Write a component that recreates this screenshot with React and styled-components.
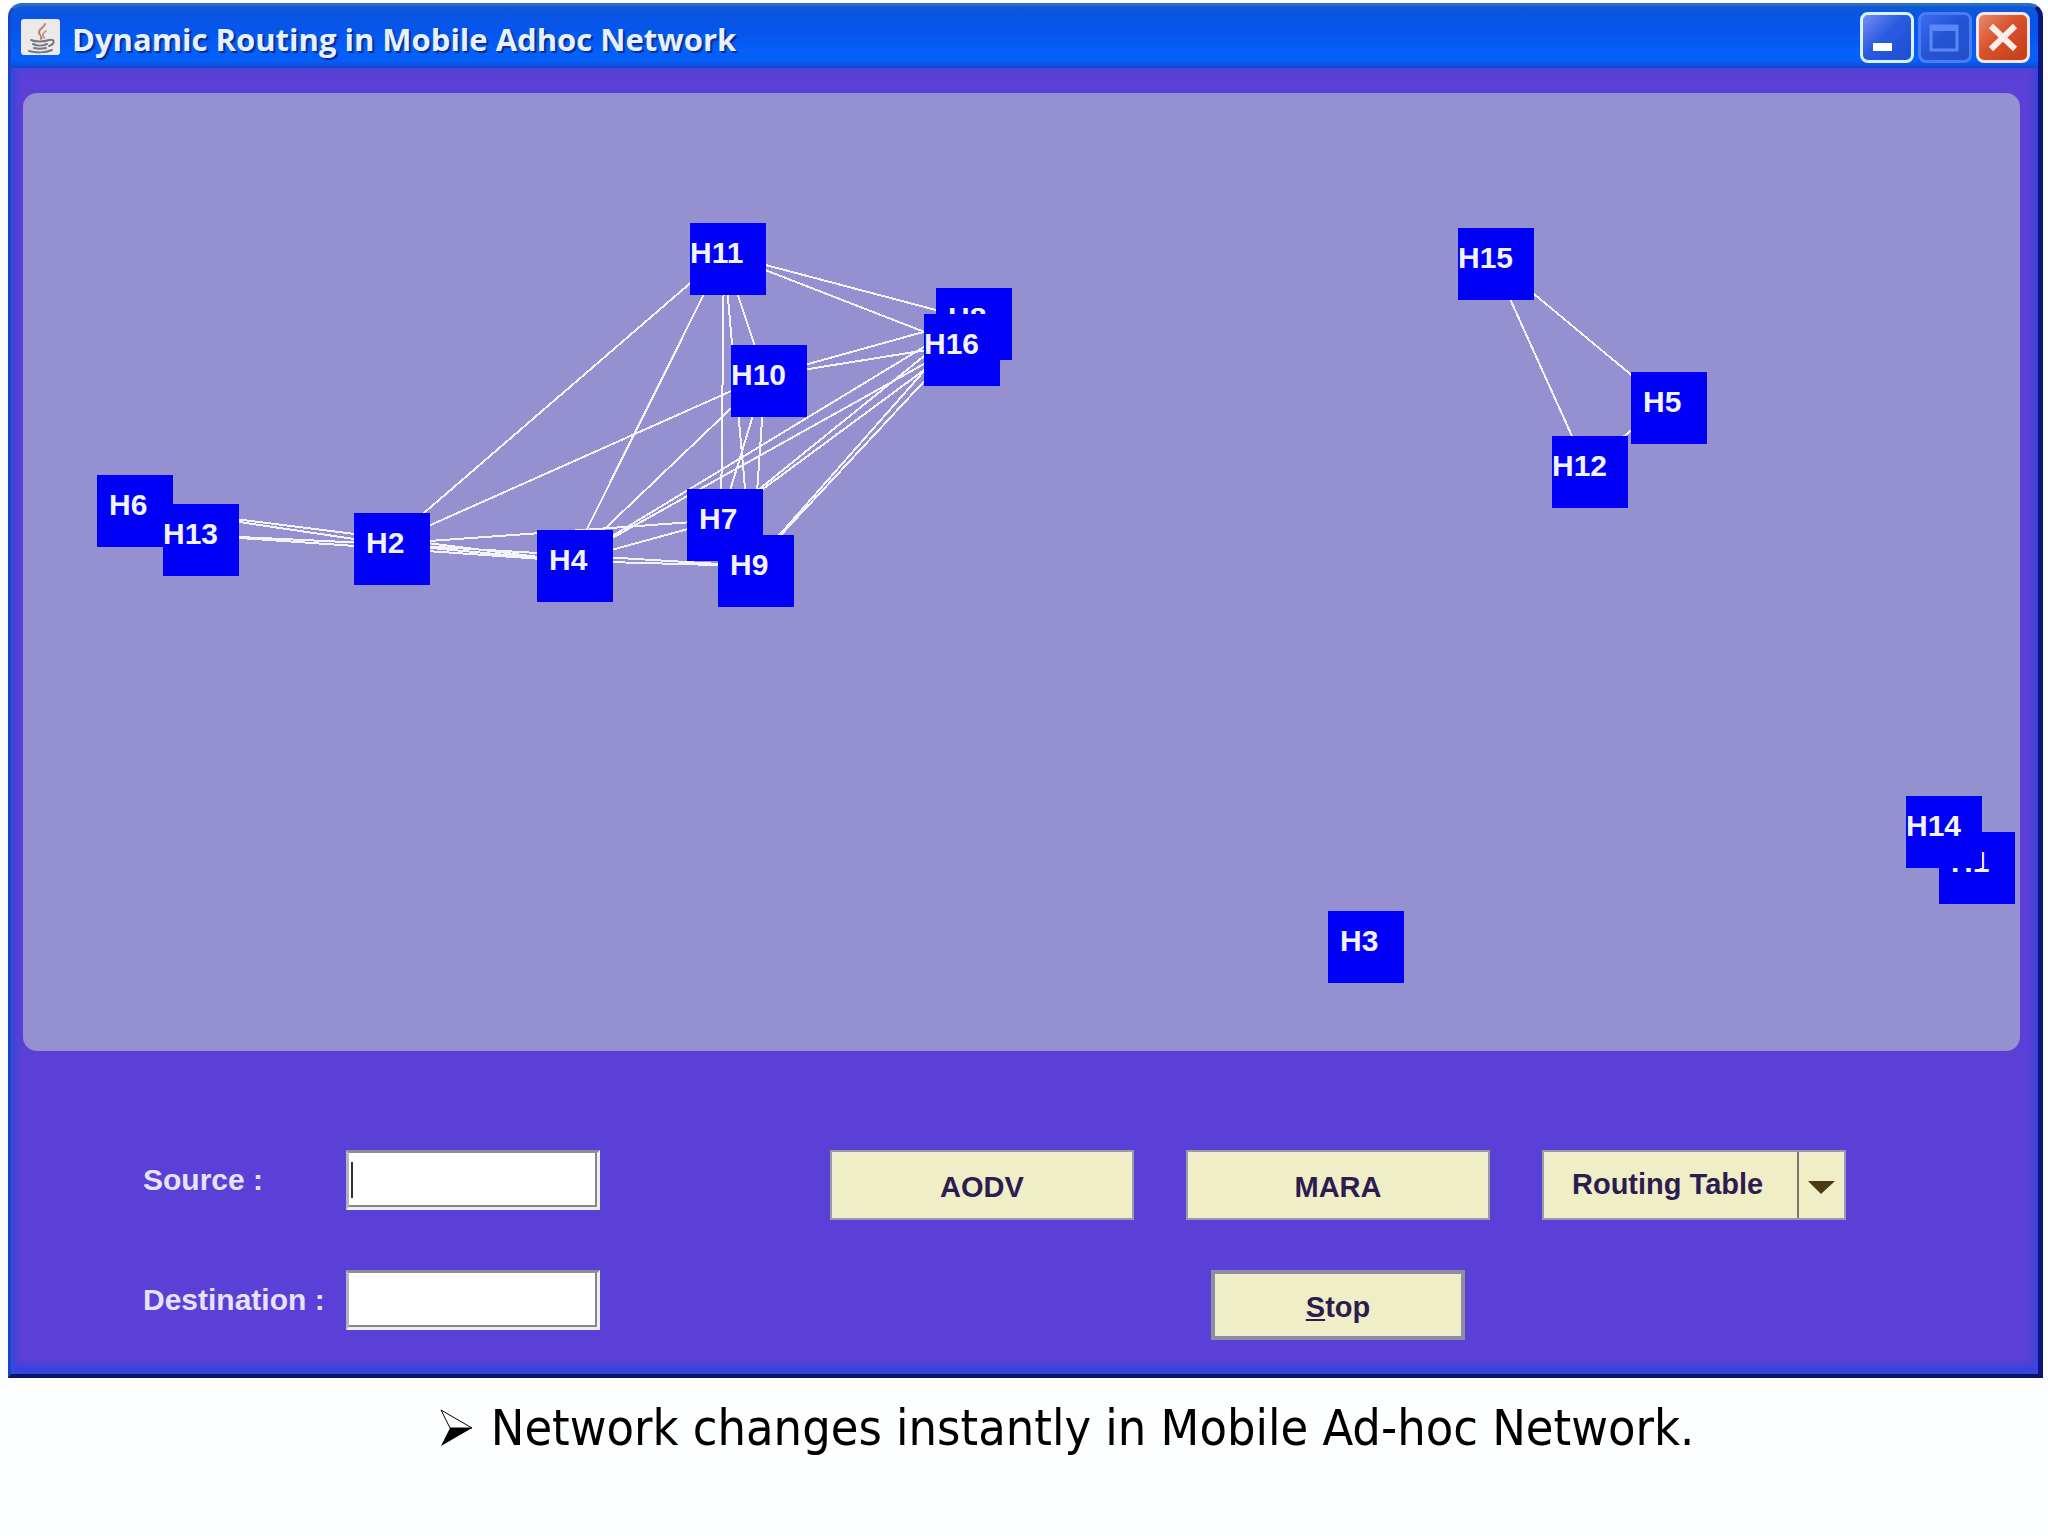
import React from "react";
import styled, { createGlobalStyle } from "styled-components";

const GlobalStyle = createGlobalStyle`
  * {
    box-sizing: border-box;
  }

  body {
    margin: 0;
    background: #fdfeff;
    font-family: "Liberation Sans", Arial, sans-serif;
  }
`;

const Page = styled.div`
  display: flex;
  flex-direction: column;
  min-height: 100vh;
`;

const Window = styled.main`
  flex: 1;
  display: flex;
  flex-direction: column;
  margin: 3px 5px 0 8px;
  border: 3px solid #1747c4;
  border-top-color: #2a6fc4;
  border-right: 5px solid #0b1580;
  border-bottom: 4px solid #081468;
  border-radius: 14px 14px 0 0;
  overflow: hidden;
  background: #5a40d6;
`;

const TitleBar = styled.header`
  display: flex;
  align-items: center;
  height: 62px;
  padding: 0 8px 0 10px;
  background: linear-gradient(
    #0f5ad6 0%,
    #0a55e4 15%,
    #0556ee 45%,
    #0560fa 75%,
    #0560fa 88%,
    #1446cc 100%
  );
`;

const Title = styled.h1`
  flex: 1;
  margin: 0;
  padding: 4px 0 0 12px;
  color: #e6f1fb;
  font: 700 31px/40px "Open Sans", sans-serif;
  text-shadow: 2px 2px 1px #0a2c94;
`;

const WindowButtons = styled.div`
  display: flex;
  gap: 4px;
`;

const looks = {
  minimize: ["#d6f2fb", "linear-gradient(135deg, #7590f4, #2a5ae0 45%, #1d4fd0)"],
  maximize: ["#4a7cf4", "linear-gradient(135deg, #3a6af0, #2454d4 50%, #2250cc)"],
  close: ["#f7e4e4", "linear-gradient(135deg, #e88a6c, #d8502c 45%, #c43c18)"],
};

const WindowButton = styled.button`
  width: 54px;
  height: 51px;
  padding: 0;
  border: 3px solid ${(props) => looks[props.$look][0]};
  border-radius: 8px;
  background: ${(props) => looks[props.$look][1]};

  & svg {
    display: block;
  }
`;

const Body = styled.div`
  flex: 1;
  display: flex;
  flex-direction: column;
  padding: 25px 18px 34px 12px;
  box-shadow: inset 5px 0 5px #3a48de, inset -5px 0 5px #3f44da,
    inset 0 -8px 6px #2e46de;
`;

const Canvas = styled.section`
  position: relative;
  flex: 1;
  min-height: 900px;
  border-radius: 14px;
  background: #9590d0;
  overflow: hidden;
`;

const Links = styled.svg`
  position: absolute;
  width: 100%;
  height: 100%;
  stroke: #f4f3fa;
  stroke-width: 2;
  shape-rendering: crispEdges;
`;

// nodes sit at free positions on the canvas
const Node = styled.div`
  position: absolute;
  width: 76px;
  height: 72px;
  padding: 14px 0 0 ${(props) => (props.$wide ? "0" : "12px")};
  background: #0000f6;
  color: #f2f2fc;
  font-size: 30px;
  font-weight: 700;
  line-height: 32px;
`;

const Controls = styled.form`
  display: flex;
  justify-content: space-between;
  padding: 99px 174px 0 120px;
`;

const Fields = styled.div`
  display: grid;
  grid-template-columns: 203px 254px;
  grid-auto-rows: 60px;
  row-gap: 60px;
  align-items: center;
`;

const Label = styled.label`
  color: #e6e2f8;
  font-size: 30px;
  font-weight: 700;
`;

const Field = styled.div`
  position: relative;
  height: 60px;
`;

const TextBox = styled.input`
  width: 100%;
  height: 100%;
  padding: 0 8px;
  border: 3px solid #f0f0f2;
  border-top-color: #8d8d98;
  border-left-color: #b4b4c0;
  background: #fff;
  box-shadow: inset -2px -2px 0 #85858c;
  font-size: 29px;
  outline: none;
`;

const Caret = styled.span`
  position: absolute;
  left: 5px;
  top: 12px;
  width: 2px;
  height: 36px;
  background: #333;
`;

const Actions = styled.div`
  display: grid;
  grid-template-columns: repeat(3, 304px);
  gap: 50px 52px;
  align-items: start;
`;

const Button = styled.button`
  height: 70px;
  padding: 4px 0 0;
  border: 2px solid #9c9c9c;
  background: #f0eec6;
  box-shadow: inset 0 0 0 2px #eeecd8;
  color: #2c1c50;
  font: 700 29px/32px "Liberation Sans", Arial, sans-serif;
`;

const StopButton = styled(Button)`
  grid-column: 2;
  justify-self: center;
  width: 254px;
  border: 4px solid #8f8f9c;
`;

const Dropdown = styled.div`
  position: relative;
  height: 70px;

  & svg {
    position: absolute;
    right: 0;
    top: 0;
    pointer-events: none;
  }
`;

const Select = styled.select`
  appearance: none;
  width: 100%;
  height: 100%;
  padding: 0 50px 2px 28px;
  border: 2px solid #9c9c9c;
  border-radius: 0;
  background: #f0eec6;
  box-shadow: inset 0 0 0 2px #eeecd8;
  color: #2c1c50;
  font: 700 29px/32px "Liberation Sans", Arial, sans-serif;
`;

const Caption = styled.footer`
  display: flex;
  justify-content: center;
  align-items: flex-start;
  gap: 18px;
  height: 158px;
  padding: 18px 0 0 86px;
  color: #000;
  font: 400 50px/64px "DejaVu Sans Condensed", "DejaVu Sans", sans-serif;

  & svg {
    margin-top: 13px;
  }

  & p {
    margin: 0;
  }
`;

// later nodes are painted over earlier ones
const nodes = {
  H1: [1916, 739],
  H2: [331, 420],
  H3: [1305, 818],
  H4: [514, 437],
  H5: [1608, 279],
  H6: [74, 382],
  H7: [664, 396],
  H8: [913, 195],
  H9: [695, 442],
  H10: [708, 252],
  H11: [667, 130],
  H12: [1529, 343],
  H13: [140, 411],
  H14: [1883, 703],
  H15: [1435, 135],
  H16: [901, 221],
};

const links = [
  ["H6", "H2"],
  ["H6", "H4"],
  ["H13", "H2"],
  ["H13", "H4"],
  ["H2", "H4"],
  ["H2", "H7"],
  ["H2", "H9"],
  ["H2", "H10"],
  ["H2", "H11"],
  ["H4", "H7"],
  ["H4", "H9"],
  ["H4", "H10"],
  ["H4", "H11"],
  ["H4", "H8"],
  ["H4", "H16"],
  ["H7", "H8"],
  ["H7", "H10"],
  ["H7", "H11"],
  ["H7", "H16"],
  ["H9", "H8"],
  ["H9", "H10"],
  ["H9", "H11"],
  ["H9", "H16"],
  ["H10", "H8"],
  ["H10", "H11"],
  ["H10", "H16"],
  ["H11", "H8"],
  ["H11", "H16"],
  ["H15", "H5"],
  ["H15", "H12"],
  ["H5", "H12"],
];

const JavaIcon = () => (
  <svg width="39" height="36" viewBox="0 0 39 36" aria-hidden="true">
    <rect width="39" height="36" rx="3" fill="#ece9ea" />
    <g fill="none" strokeLinecap="round">
      <path d="M24 5c-1 4-7 5-6 9 1 2 3 3 2 6" stroke="#b98772" strokeWidth="2" />
      <path d="M25 12c-3 2-4 3-2 7" stroke="#c79f8e" strokeWidth="2" />
      <path
        d="M10 21c4 2 13 2 18 0M12 25c4 2 10 2 14 0M13 29c4 1 8 1 12 0M8 32c7 2 17 2 23-1M29 21c5-1 5 4-1 6"
        stroke="#77777f"
        strokeWidth="2"
      />
    </g>
  </svg>
);

function Network() {
  return (
    <Canvas>
      <Links>
        {links.map(([a, b]) => (
          <line
            key={a + b}
            x1={nodes[a][0] + 34}
            y1={nodes[a][1] + 31}
            x2={nodes[b][0] + 34}
            y2={nodes[b][1] + 31}
          />
        ))}
      </Links>
      {Object.entries(nodes).map(([name, [x, y]]) => (
        <Node key={name} $wide={name.length > 2} style={{ left: x, top: y }}>
          {name}
        </Node>
      ))}
    </Canvas>
  );
}

export default function App() {
  return (
    <Page>
      <GlobalStyle />
      <Window>
        <TitleBar>
          <JavaIcon />
          <Title>Dynamic Routing in Mobile Adhoc Network</Title>
          <WindowButtons>
            <WindowButton $look="minimize" aria-label="Minimize">
              <svg width="48" height="45">
                <rect x="10" y="28" width="19" height="8" fill="#fff" />
              </svg>
            </WindowButton>
            <WindowButton $look="maximize" aria-label="Maximize">
              <svg width="48" height="45" fill="none" stroke="#5c86f4">
                <rect x="10" y="11" width="26" height="24" strokeWidth="3" />
                <path d="M9 13h28" strokeWidth="6" />
              </svg>
            </WindowButton>
            <WindowButton $look="close" aria-label="Close">
              <svg width="48" height="45">
                <path d="M12 11l24 23M36 11L12 34" stroke="#fbeee8" strokeWidth="6" />
              </svg>
            </WindowButton>
          </WindowButtons>
        </TitleBar>

        <Body>
          <Network />
          <Controls onSubmit={(e) => e.preventDefault()}>
            <Fields>
              <Label htmlFor="source">Source :</Label>
              <Field>
                <TextBox id="source" type="text" />
                <Caret />
              </Field>
              <Label htmlFor="destination">Destination :</Label>
              <Field>
                <TextBox id="destination" type="text" />
              </Field>
            </Fields>
            <Actions>
              <Button type="button">AODV</Button>
              <Button type="button">MARA</Button>
              <Dropdown>
                <Select aria-label="Routing Table">
                  <option>Routing Table</option>
                </Select>
                <svg width="50" height="70">
                  <path d="M2 2v66" stroke="#77776c" strokeWidth="2" />
                  <path d="M12 31h27L25 44z" fill="#4a3c10" />
                </svg>
              </Dropdown>
              <StopButton type="button">
                <u>S</u>top
              </StopButton>
            </Actions>
          </Controls>
        </Body>
      </Window>

      <Caption>
        <svg width="33" height="38" viewBox="0 0 33 38" aria-hidden="true">
          <path d="M1 1l31 18H10z" fill="#fff" stroke="#000" strokeWidth="1" />
          <path d="M10 19h22L1 37z" fill="#000" />
        </svg>
        <p>Network changes instantly in Mobile Ad-hoc Network.</p>
      </Caption>
    </Page>
  );
}
